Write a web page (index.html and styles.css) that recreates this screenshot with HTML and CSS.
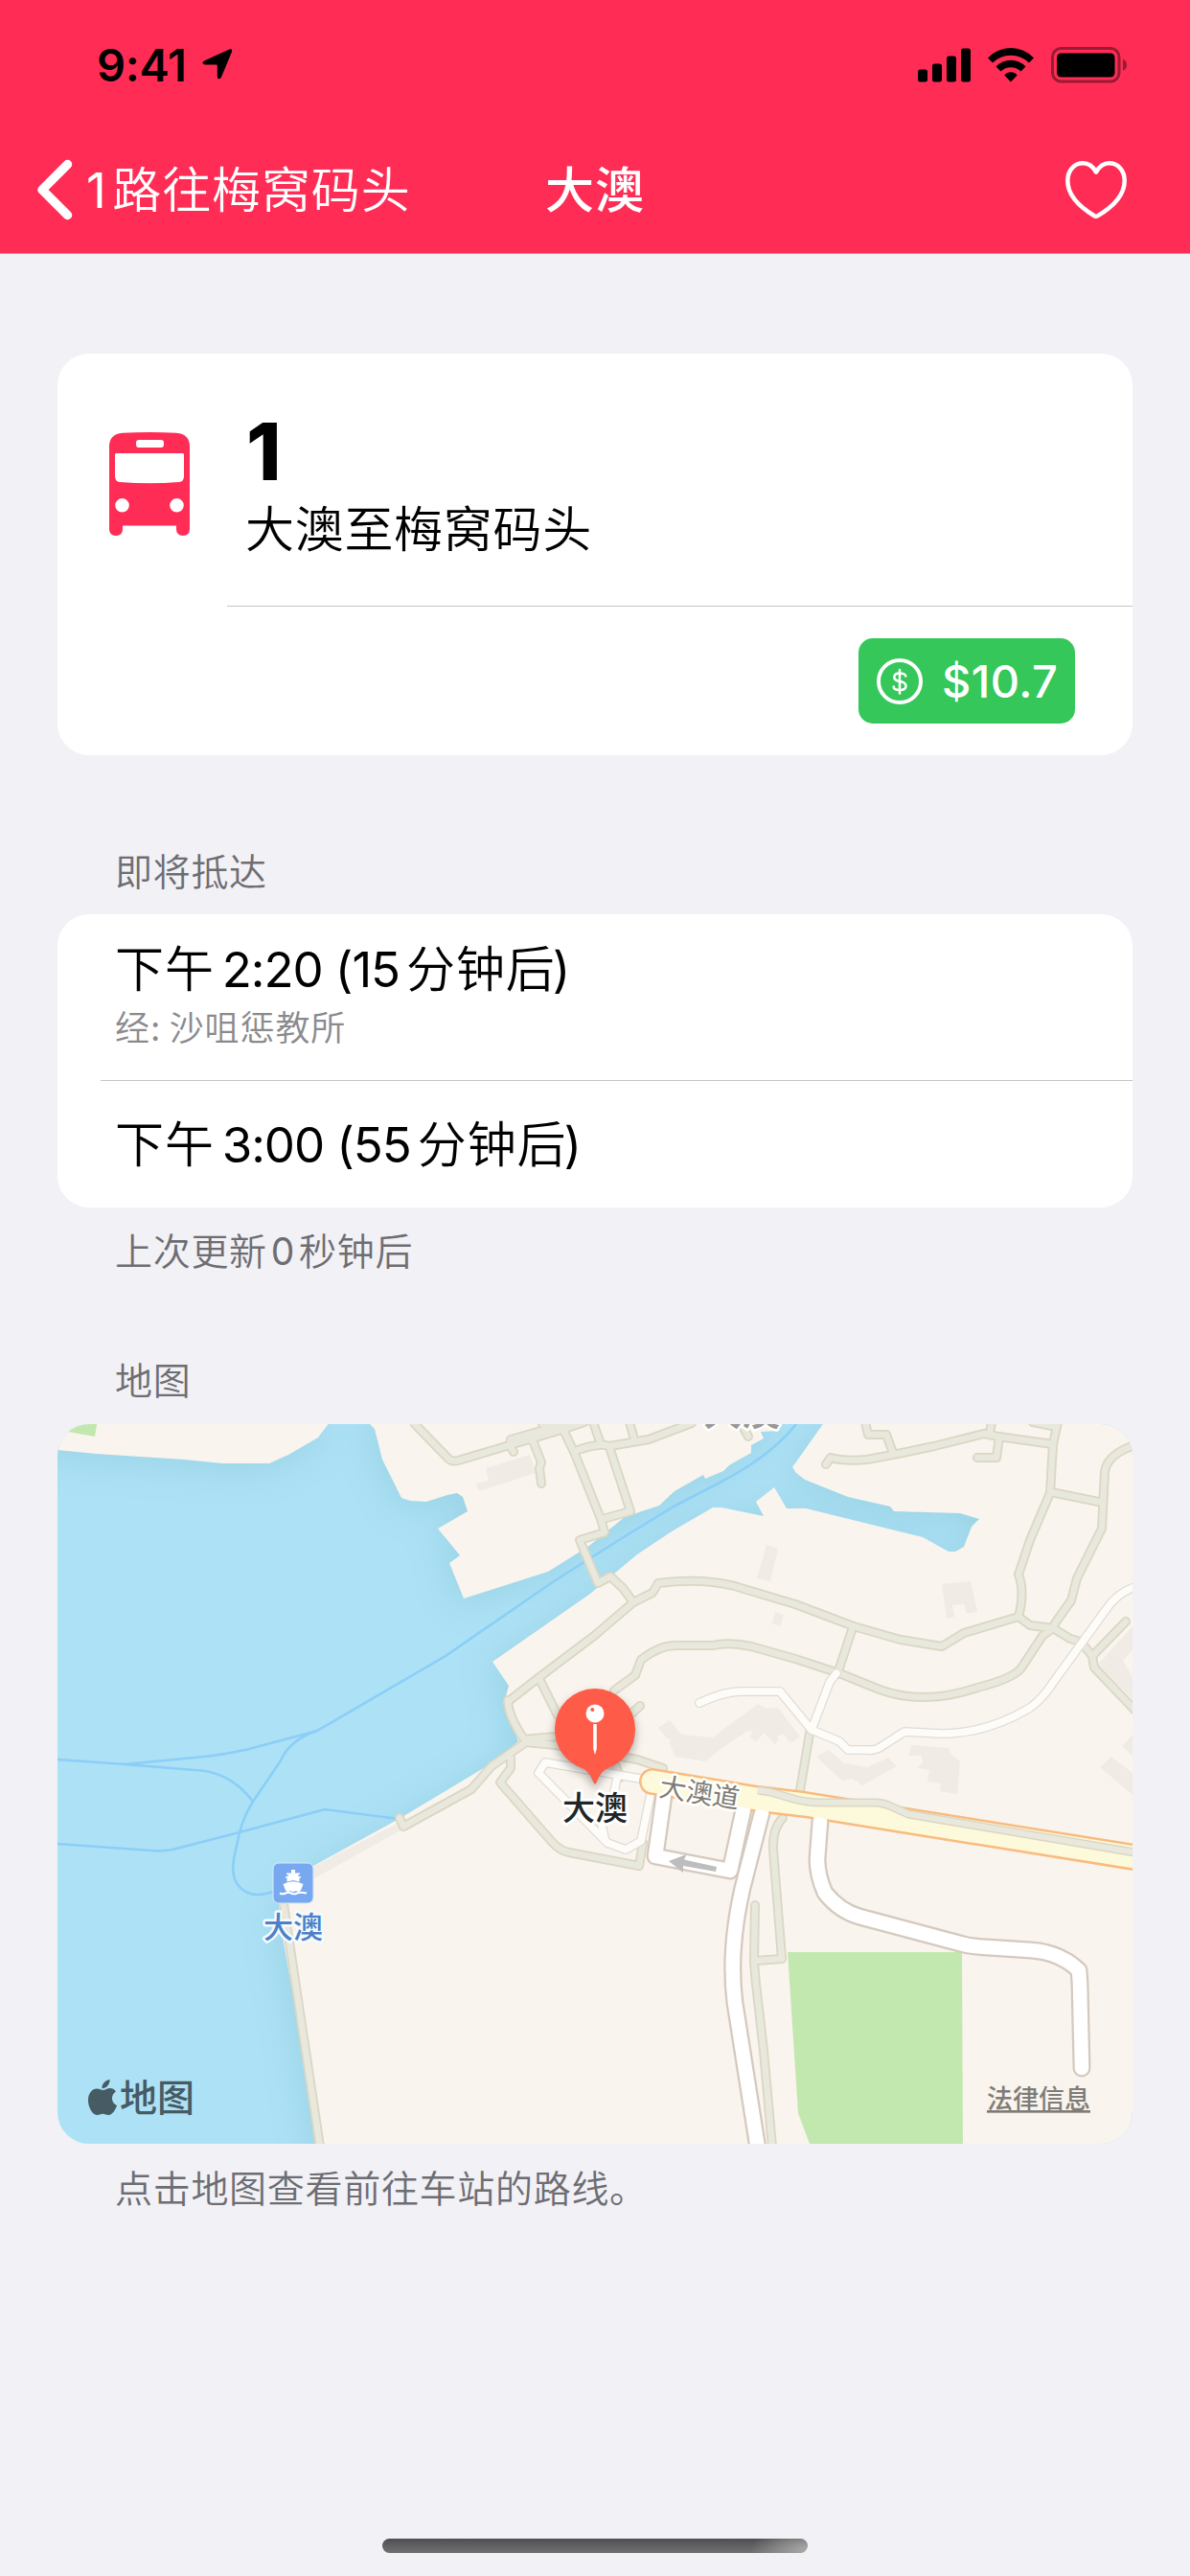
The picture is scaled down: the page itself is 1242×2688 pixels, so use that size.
FILE: index.html
```html
<!DOCTYPE html>
<html lang="zh-Hans">
<head>
<meta charset="utf-8">
<meta name="viewport" content="width=device-width">
<title>大澳</title>
<link rel="stylesheet" href="styles.css">
</head>
<body>
<header class="header">
  <div class="status">
    <div class="status-left">
      <span class="clock">9:41</span>
      <svg class="location" viewBox="0 0 32 32" width="32" height="32"><path d="M28.4.5Q32-.6 31 3L20 29.5Q18.8 31.7 17 31.3 15.800 31 15.800 28.500V17.800Q15.800 16.600 14.500 16.600H3.300Q.6 16.500.4 14.800.3 13.300 2.500 12.200Z"/></svg>
    </div>
    <div class="status-right">
      <svg class="signal" viewBox="0 0 55 36" width="55" height="36"><rect y="22.500" width="10" height="13" rx="2.500"/><rect x="15" y="16.500" width="10" height="19" rx="2.500"/><rect x="30" y="8.500" width="10" height="27" rx="2.500"/><rect x="45" y=".5" width="10" height="35" rx="2.500"/></svg>
      <svg class="wifi" viewBox="0 0 48 36" width="48" height="36"><path d="M0 10.500Q10 0 24 0T48 10.500L43 15.500Q35 7.700 24 7.700T5 15.500Z"/><path d="M8.500 19.500Q15 12.700 24 12.700T39.500 19.500L34.500 24.600Q30 20.300 24 20.300T13.500 24.600Z"/><path d="M17.300 28.600Q20 25.300 24 25.300T30.700 28.600L24 35.600Z"/></svg>
      <svg class="battery" viewBox="0 0 80 38" width="80" height="38"><rect x="1.500" y="1.500" width="69.500" height="34.500" rx="9" class="battery-case"/><rect x="6" y="6.500" width="60.500" height="25" rx="4.500"/><path class="battery-tip" d="M75 12.500Q79 14.500 79 18.800T75 25Z"/></svg>
    </div>
  </div>
  <nav class="nav">
    <a class="back">
      <svg viewBox="0 0 38 64" width="38" height="64"><path d="M32.500 5.500 6 32 32.500 58.500"/></svg>
      <span class="back-label"><span class="num route-id">1</span>路往梅窝码头</span>
    </a>
    <h1 class="title">大澳</h1>
    <svg class="heart" viewBox="0 0 64 60" width="64" height="60"><path d="M32 11.500C28.500 5.500 24 2.300 18.500 2.300 9 2.300 2.300 9.800 2.300 20.500 2.300 34.500 14 47.500 30.200 57.200Q32 58.300 33.800 57.200C50 47.500 61.700 34.500 61.700 20.500 61.700 9.800 55 2.300 45.500 2.300 40 2.300 35.500 5.500 32 11.500Z"/></svg>
  </nav>
</header>

<main class="content">
  <section class="card route-card">
    <div class="route">
      <svg class="bus" viewBox="0 0 84 108" width="84" height="108"><path fill-rule="evenodd" d="M14 0.800Q42-.8 70 .8 84 2 84 15V101Q84 108 77 108T70 101V97.500H14V101Q14 108 7 108T0 101V15Q0 2 14 .8ZM31 8Q28 8 28 11V13Q28 16 31 16H54Q57 16 57 13V11Q57 8 54 8ZM7 22Q6 22 6 23.500V46Q6 51.500 11 52 42 54.500 73 52 78 51.500 78 46V23.500Q78 22 77 22ZM13.500 69A7.300 7.300 0 1 0 13.500 83.600 7.300 7.300 0 1 0 13.500 69ZM70.500 69A7.300 7.300 0 1 0 70.500 83.600 7.300 7.300 0 1 0 70.500 69Z"/></svg>
      <div class="route-text">
        <div class="route-number">1</div>
        <div class="route-name">大澳至梅窝码头</div>
      </div>
    </div>
    <div class="fare-row">
      <div class="fare">
        <svg class="coin" viewBox="0 0 48 48" width="48" height="48"><circle cx="24" cy="24" r="22"/><path d="M30.300 18.500Q29.500 15.500 24 15.500T18.300 19.500Q18.300 23 24 24 30.500 25 30.500 29 30.500 33 24 33T17.700 29.500M24 12V36.500"/></svg>
        <span class="fare-value">$10.7</span>
      </div>
    </div>
  </section>

  <h2 class="section-title arrivals-title">即将抵达</h2>
  <section class="card">
    <div class="arrival arrival-via">
      <div class="time">下午<span class="num when">2:20 (15</span>分钟后<span class="num close">)</span></div>
      <div class="via">经<span class="num">: </span>沙咀惩教所</div>
    </div>
    <div class="arrival arrival-plain">
      <div class="time">下午<span class="num when">3:00 (55</span>分钟后<span class="num close">)</span></div>
    </div>
  </section>
  <p class="note">上次更新<span class="num zero">0</span>秒钟后</p>

  <h2 class="section-title map-title">地图</h2>
  <section class="map">
    <svg viewBox="60 1486 1122 751" width="1122" height="751">
      <defs>
        <filter id="coast" x="-10%" y="-10%" width="120%" height="120%" color-interpolation-filters="sRGB"><feDropShadow dx="-4" dy="6" stdDeviation="17" flood-color="#98d1e2" flood-opacity=".9"/></filter>
        <filter id="pin-shadow" x="-40%" y="-40%" width="180%" height="180%" color-interpolation-filters="sRGB"><feDropShadow dx="0" dy="5" stdDeviation="5" flood-color="#000" flood-opacity=".32"/></filter>
        <g id="footpaths">
          <path d="M433 1486 467 1521Q471 1526 478 1524L532 1508 586 1492 610 1484"/>
          <path d="M590 1486 533 1502 532 1508 536 1515M556 1503 565 1526 563 1532 565 1548M566 1486H583"/>
          <path d="M588 1492 600 1517 627 1585 631 1599 605 1607 624 1652 637 1645 650 1657 661 1672"/>
          <path d="M629 1585 658 1577 636 1510M627 1507 619 1484M657 1484 662 1502M776 1490 781 1499"/>
          <path d="M600 1514Q626 1505 636 1509L677 1502 722 1485"/>
          <path d="M903 1484 906 1497H925L932 1516M862 1528 867 1521Q880 1525 905 1523L937 1517 975 1509 1027 1496 1042 1499 1099 1507"/>
          <path d="M1035 1484 1033 1495M1043 1499 1040 1521 1020 1521M1078 1484 1103 1489"/>
          <path d="M1104 1484 1099 1507 1096 1558 1075 1607 1063 1643Q1070 1661 1063 1687"/>
          <path d="M1184 1508Q1155 1518 1153 1536L1150 1595 1124 1647 1118 1670 1101 1694 1099 1699M1097 1557 1151 1568"/>
          <path d="M531 1775 563 1750 620 1707 661 1672 681 1662 687 1652Q735 1646 770 1656L830 1674 891 1697 940 1711 983 1718 1006 1704 1063 1687 1075 1696 1099 1699 1117 1710 1128 1713 1140 1728 1142 1740 1184 1784M1175 1692 1140 1728"/>
          <path d="M641 1764 663 1748 669 1732Q688 1717 705 1717H744Q759 1713 784 1718L830 1731 876 1746 918 1763Q964 1780 1020 1761 1060 1751 1067 1739L1088 1707 1099 1699"/>
          <path d="M890 1698 874 1747M846 1803 835 1868M668 1780 655 1792"/>
          <path d="M563 1752 582 1790M530 1774Q530 1790 547 1815L580 1812M549 1818 580 1821 665 1836 692 1845M615 1825 640 1835 647 1855"/>
          <path d="M549 1818 513 1843 492 1867 421 1906M421 1906 417 1897M533 1835V1845L522 1860 576 1922Q584 1931 594 1933L667 1947 671 1923"/>
          <path d="M296 1987 304 2040 334 2240"/>
          <path d="M817 1897Q806 1908 807 1930L816 2044 788 2046M788 1988 787 2048 789 2070 797 2140 806 2240"/>
        </g>
        <g id="lanes">
          <path d="M730 1777Q755 1765 775 1765H814L847 1805 876 1817 885 1826H905Q913 1827 919 1823L944 1807 983 1809Q1030 1809 1075 1782 1088 1773 1101 1753L1154 1680Q1165 1663 1184 1656"/>
          <path d="M873 1746 866 1755 847 1805"/>
          <path d="M674 1857 569 1839 562 1850 634 1923 653 1930 669 1921 679 1872M644 1855 639 1880 627 1900 631 1917"/>
        </g>
        <g id="streets">
          <path d="M693 1873 684 1937 762 1952 776 1888"/>
          <path d="M795 1892 775 1970Q760 2035 767 2090L791 2242"/>
          <path d="M856 1900 853 1940Q853 1957 861 1975 876 1994 897 2000L1002 2028Q1012 2031 1030 2032L1076 2035Q1106 2037 1126 2056L1127 2070 1129 2158"/>
        </g>
      </defs>
      <rect class="sea" x="60" y="1486" width="1122" height="751"/>
      <g class="land" filter="url(#coast)">
        <path d="M40 1512 60 1513 100 1517 192 1523 232 1527H281L301 1518 332 1500 350 1476H40Z"/>
        <path d="M386 1476V1486L391 1491 399 1523 419 1563 428 1566 445 1567 467 1560 477 1558 483 1562 488 1577 457 1595 480 1623 469 1631 484 1668 572 1640 615 1613 652 1583 688 1571 704 1556 734 1539 736 1543 755 1535 761 1529 784 1516V1508L797 1501 794 1494 812 1493 820 1476Z"/>
        <path d="M866 1476 827 1531 831 1537 840 1544 885 1562 929 1572 933 1577 1002 1579 1022 1585 1014 1593 1006 1614 997 1619H990L963 1604 906 1590 841 1574H821L808 1552 789 1567 797 1582 753 1573H744L701 1598 665 1622 641 1642 616 1663 514 1734 531 1759 526 1777 541 1817 513 1840 418 1897 327 1947 291 1987 296 2027 309 2100 332 2250H1200V1476Z"/>
      </g>
      <path class="park" d="M60 1480H102L99 1499 71 1494 60 1491ZM822 2037H1004L1005 2237H845L833 2205Z"/>
      <g class="building">
        <path d="M327 1948 414 1903 420 1909 328 1960ZM507 1532 553 1518 559 1537 500 1556 497 1548 510 1545ZM800 1612 812 1616 804 1650 790 1647ZM809 1682 818 1685 814 1697 806 1694ZM983 1653 1013 1650 1020 1682 1009 1684 1006 1674 994 1675 996 1687 988 1689ZM1182 1697 1146 1737 1182 1773V1750L1172 1733 1182 1722Z"/>
        <path d="M687 1803 699 1795 711 1810 744 1813 791 1778 799 1783 812 1782 835 1812 825 1819 818 1810 811 1811 812 1816 809 1820 797 1808 789 1818 783 1812 786 1806 779 1807 755 1823 736 1838 705 1833 698 1818 701 1815 696 1814Z"/>
        <path d="M852 1833 865 1826 881 1840 906 1844 927 1834 936 1843 900 1863 890 1856 879 1858ZM951 1821 990 1824 992 1830 1002 1838 999 1872 981 1869 982 1861 968 1859 970 1847 957 1845 963 1840 962 1832 948 1832ZM1182 1810 1171 1822 1182 1832ZM1160 1833 1182 1850V1873L1148 1844Z"/>
      </g>
      <g class="ferry-route">
        <path d="M831 1486Q805 1519 753 1546L703 1572 646 1607 578 1650 465 1728 331 1806 260 1825Q230 1832 203 1834L130 1841 60 1836"/>
        <path d="M130 1841 203 1847Q240 1848 264 1880M331 1806Q303 1815 293 1837L264 1880Q255 1894 250 1912L244 1940Q241 1960 250 1969 263 1982 285 1974M60 1924 158 1931Q168 1932 180 1930L250 1912 339 1888 416 1898"/>
      </g>
      <use href="#footpaths" class="footpath-edge"/><use href="#footpaths" class="footpath"/>
      <use href="#lanes" class="lane-edge"/><use href="#lanes" class="lane"/>
      <use href="#streets" class="street-edge"/>
      <path class="main-edge" d="M681 1859 790 1877 840 1883 1190 1939"/>
      <use href="#streets" class="street"/>
      <path class="main-road" d="M681 1859 790 1877 840 1883 1190 1939"/>
      <g fill="none" stroke-linejoin="round"><path class="trail-edge" d="M791 1868 804 1870 828 1877Q842 1881 860 1881H912Q922 1881 930 1885L948 1893 1190 1934"/><path class="trail" d="M791 1868 804 1870 828 1877Q842 1881 860 1881H912Q922 1881 930 1885L948 1893 1190 1934"/></g>
      <path class="arrow" d="M698 1942 716.500 1935 714 1940.500 748 1948 747 1953 713 1947 713 1954Z"/>
      <text class="road-label" x="687" y="1874" transform="rotate(9 687 1874)">大澳道</text>
      <text class="area-label" x="734" y="1487">大澳</text>

      <rect class="pier" x="285" y="1944" width="42" height="42" rx="6"/>
      <path class="ship" d="M304 1951H308V1954.500H313V1956H311.500V1958H314V1959.500H312.500V1963.500L306 1962 299.500 1963.500V1959.500H298V1958H300.500V1956H299V1954.500H304ZM295.500 1966Q306 1960.500 316.500 1966L314 1972.500Q312 1975 309 1973 306 1975 303 1973 300 1975 298 1972.500Z"/>
      <path class="waves" d="M292 1975.500Q295 1977 298 1975.500T304 1975.500 310 1975.500 320 1975.500"/>
      <text class="pier-label" x="306" y="2022">大澳</text>

      <path class="pin" filter="url(#pin-shadow)" d="M621 1762A42 42 0 0 1 663 1804C663 1825 650 1839 635 1845 627 1848 625 1855 622.500 1860Q621 1863 619.500 1860C617 1855 615 1848 607 1845 592 1839 579 1825 579 1804A42 42 0 0 1 621 1762Z"/>
      <circle class="pin-head" cx="621" cy="1788" r="9.500"/>
      <circle class="pin-glint" cx="618.300" cy="1784" r="2"/>
      <path class="pin-head" d="M619.200 1799H622.800V1825L621 1831 619.200 1825Z"/>
      <text class="pin-label" x="621" y="1899">大澳</text>

      <path class="apple" d="M114.500 2170C115 2175 110.500 2179.500 106.500 2179.300 106 2174.500 110.500 2170.300 114.500 2170ZM107.500 2181C109.500 2181 112 2179 115 2179 117 2179 119.500 2180 121 2182.500 115 2186 116 2194.500 122 2197 120.500 2201.500 117 2207 113.500 2207 111 2207 110 2205.700 107.300 2205.700S103.500 2207 101 2207C96.500 2207 92 2198.500 92 2191.500 92 2184 96.500 2179.500 101 2179.500 104 2179.500 106 2181 107.500 2181Z"/>
      <text class="brand" x="125" y="2203">地图</text>
      <text class="legal" x="1030" y="2200">法律信息</text>
    </svg>
  </section>
  <p class="note">点击地图查看前往车站的路线。</p>
</main>
<footer class="home"><div class="home-bar"></div></footer>
</body>
</html>
```
FILE: styles.css
```css
* { box-sizing: border-box; }
body {
  margin: 0;
  width: 1242px;
  height: 2688px;
  display: flex;
  flex-direction: column;
  background: #f2f1f6;
  color: #000;
  font-family: "Noto Sans CJK SC", sans-serif;
  font-weight: 350;
  overflow: hidden;
}
h1, h2, p { margin: 0; font-weight: inherit; }
svg { display: block; flex: none; }
.num { font-family: Inter, sans-serif; font-weight: 400; line-height: 0; letter-spacing: -0.01em; }

.header { height: 265px; background: #ff2d55; border-bottom: 1px solid #a9a2ab; }
.status { height: 136px; padding: 0 65px 0 101px; display: flex; justify-content: space-between; align-items: center; }
.status-left, .status-right { display: flex; align-items: center; }
.clock { font: 600 47px/56px Inter, sans-serif; letter-spacing: -.3px; width: 110px; }
.location { margin-bottom: 2px; }
.status-right svg { margin-left: 18px; }
.battery-case { fill: none; stroke: #000; stroke-width: 3; opacity: .4; }
.battery-tip { opacity: .4; }

.nav { height: 128px; display: grid; grid-template-columns: 1fr auto 1fr; align-items: center; padding: 0 66px 4px; color: #fff; }
.back { display: flex; align-items: center; gap: 14px; margin-left: -28px; }
.back svg path { fill: none; stroke: #fff; stroke-width: 9.500; stroke-linecap: round; stroke-linejoin: round; }
.back-label, .title { font-size: 51px; line-height: 60px; letter-spacing: .9px; padding-bottom: 6px; white-space: nowrap; }
.route-id { margin-right: 7px; }
.title { font-weight: 500; }
.heart { justify-self: end; }
.heart path { fill: none; stroke: #fff; stroke-width: 4.500; stroke-linejoin: round; }

.content { padding: 104px 60px 0; }
.card { background: #fff; border-radius: 33px; overflow: hidden; }
.route { height: 263px; display: flex; padding: 64px 0 0 54px; }
.bus { margin-top: 18px; fill: #ff2d55; }
.route-text { margin-left: 58px; }
.route-number { font: 800 83px/76px Inter, sans-serif; padding-left: 1px; }
.route-name { font-size: 51px; line-height: 70px; letter-spacing: .7px; margin-top: 5px; }
.fare-row { height: 156px; margin-left: 177px; padding-right: 60px; border-top: 1px solid #c5c5c7; display: flex; align-items: center; justify-content: flex-end; }
.fare { width: 226px; height: 89px; padding-left: 19px; border-radius: 15px; background: #35c759; color: #fff; display: flex; align-items: center; gap: 20px; }
.coin { fill: none; stroke: #fff; stroke-width: 4; stroke-linecap: round; }
.coin path { stroke-width: 2.500; }
.fare-value { font: 500 47px/56px Inter, sans-serif; letter-spacing: .4px; }

.section-title, .note { color: #6d6d72; font-size: 39px; line-height: 48px; letter-spacing: .7px; padding-left: 60px; }
.arrivals-title { margin-top: 95px; margin-bottom: 23px; }
.arrival { padding-left: 60px; }
.arrival-via { height: 173px; padding-top: 22px; }
.arrival-plain { position: relative; height: 133px; padding-top: 32px; }
.arrival-plain::before { content: ""; position: absolute; top: 0; left: 45px; right: 0; height: 1px; background: #c5c5c7; }
.time { font-size: 51px; line-height: 64px; letter-spacing: .9px; white-space: nowrap; }
.when { margin: 0 7px 0 8px; letter-spacing: -.021em; }
.close { margin-left: -3px; }
.via { font-size: 36px; line-height: 50px; margin-top: 5px; color: #8a8a8e; letter-spacing: .9px; }
.zero { margin: 0 5px 0 4px; }
.card + .note { margin-top: 19px; }
.map-title { margin-top: 87px; margin-bottom: 24px; }
.map { height: 751px; border-radius: 33px; overflow: hidden; }
.map + .note { margin-top: 20px; }

.sea { fill: #ade1f6; }
.land { fill: #f9f4ed; }
.park { fill: #c2e8af; }
.building { fill: #f0ebe5; }
.ferry-route { fill: none; stroke: #8bcef7; stroke-width: 2.600; }
.footpath-edge, .footpath, .lane-edge, .lane, .street-edge, .street { fill: none; stroke-linejoin: round; stroke-linecap: round; }
.footpath-edge { stroke: #dbd6c4; stroke-width: 10; }
.footpath { stroke: #e8e8dc; stroke-width: 6.500; }
.lane-edge { stroke: #dfdcd7; stroke-width: 10; }
.lane { stroke: #fefcf9; stroke-width: 7.500; }
.street-edge { stroke: #d4c9be; stroke-width: 19; }
.street { stroke: #fff; stroke-width: 14.500; }
.main-edge, .main-road { fill: none; stroke-linecap: round; stroke-linejoin: round; }
.main-edge { stroke: #f9bb7f; stroke-width: 28; }
.main-road { stroke: #fcfada; stroke-width: 23; }
.trail-edge { stroke: #dbd6c4; stroke-width: 9; }
.trail { stroke: #e8e8dc; stroke-width: 6; }
.arrow { fill: #bdbdbd; }
.map text { font-family: "Noto Sans CJK SC", sans-serif; paint-order: stroke; stroke-linejoin: round; }
.road-label { font-size: 28px; font-weight: 400; fill: #7e7b76; stroke: #fffffb; stroke-width: 5px; }
.area-label { font-size: 40px; font-weight: 700; fill: #9b9996; stroke: #fff; stroke-width: 5px; }
.pier { fill: #78a9f0; stroke: #d6ecfb; stroke-width: 1; }
.ship { fill: #fff; }
.waves { fill: none; stroke: #fff; stroke-width: 2; }
.pier-label { font-size: 31px; font-weight: 500; fill: #4e80c6; stroke: #f5fbff; stroke-width: 5px; text-anchor: middle; }
.pin, .pin-glint { fill: #ff5b49; }
.pin-head { fill: #fff; }
.pin-label { font-size: 34px; font-weight: 500; fill: #222426; stroke: #fff; stroke-width: 6px; text-anchor: middle; }
.apple { fill: #465b63; }
.brand { font-size: 39px; font-weight: 500; fill: #465b63; }
.legal { font-size: 27px; font-weight: 500; fill: #7f7c77; text-decoration: underline; }

.home { margin-top: auto; height: 39px; display: flex; justify-content: center; }
.home-bar { width: 444px; height: 15px; border-radius: 8px; background: radial-gradient(ellipse 60px 26px at 100% 80%, #aaa 0, #aaaaaa00 100%), linear-gradient(#4f4f51, #717173); }
```
